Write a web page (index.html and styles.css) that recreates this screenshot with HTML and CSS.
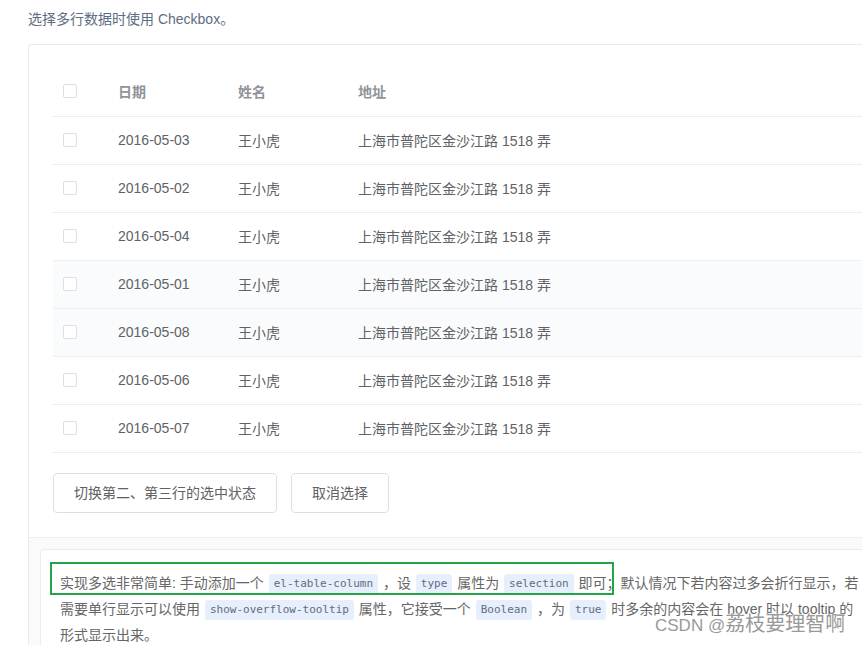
FILE: index.html
```html
<!DOCTYPE html>
<html lang="zh-CN">
<head>
<meta charset="utf-8">
<title>Checkbox 多选</title>
<link rel="stylesheet" href="styles.css">
</head>
<body>
<p class="intro">选择多行数据时使用 Checkbox。</p>
<div class="card">
  <div class="card-body">
    <div class="table">
      <div class="row head">
        <div class="cell"><span class="checkbox"></span></div>
        <div class="cell">日期</div>
        <div class="cell">姓名</div>
        <div class="cell">地址</div>
      </div>
      <div class="row">
        <div class="cell"><span class="checkbox"></span></div>
        <div class="cell">2016-05-03</div>
        <div class="cell">王小虎</div>
        <div class="cell">上海市普陀区金沙江路 1518 弄</div>
      </div>
      <div class="row">
        <div class="cell"><span class="checkbox"></span></div>
        <div class="cell">2016-05-02</div>
        <div class="cell">王小虎</div>
        <div class="cell">上海市普陀区金沙江路 1518 弄</div>
      </div>
      <div class="row">
        <div class="cell"><span class="checkbox"></span></div>
        <div class="cell">2016-05-04</div>
        <div class="cell">王小虎</div>
        <div class="cell">上海市普陀区金沙江路 1518 弄</div>
      </div>
      <div class="row shaded">
        <div class="cell"><span class="checkbox"></span></div>
        <div class="cell">2016-05-01</div>
        <div class="cell">王小虎</div>
        <div class="cell">上海市普陀区金沙江路 1518 弄</div>
      </div>
      <div class="row shaded">
        <div class="cell"><span class="checkbox"></span></div>
        <div class="cell">2016-05-08</div>
        <div class="cell">王小虎</div>
        <div class="cell">上海市普陀区金沙江路 1518 弄</div>
      </div>
      <div class="row">
        <div class="cell"><span class="checkbox"></span></div>
        <div class="cell">2016-05-06</div>
        <div class="cell">王小虎</div>
        <div class="cell">上海市普陀区金沙江路 1518 弄</div>
      </div>
      <div class="row">
        <div class="cell"><span class="checkbox"></span></div>
        <div class="cell">2016-05-07</div>
        <div class="cell">王小虎</div>
        <div class="cell">上海市普陀区金沙江路 1518 弄</div>
      </div>
    </div>
    <div class="actions">
      <button class="btn">切换第二、第三行的选中状态</button>
      <button class="btn">取消选择</button>
    </div>
  </div>
  <div class="meta">
    <div class="desc">
      <p>实现多选非常简单: 手动添加一个 <code>el-table-column</code> ，设 <code>type</code> 属性为 <code>selection</code> 即可；默认情况下若内容过多会折行显示，若<br>需要单行显示可以使用 <code>show-overflow-tooltip</code> 属性，它接受一个 <code>Boolean</code> ，为 <code>true</code> 时多余的内容会在 hover 时以 tooltip 的<br>形式显示出来。</p>
      <div class="highlight"></div>
    </div>
  </div>
</div>
<div class="watermark"><span class="wm-latin">CSDN @</span><span class="wm-cjk">荔枝要理智啊</span></div>
</body>
</html>
```
FILE: styles.css
```css
html, body {
  margin: 0;
  padding: 0;
  overflow: hidden;
  background: #fff;
}
body {
  font-family: "Liberation Sans", "Noto Sans CJK SC", sans-serif;
  font-size: 14px;
  color: #606266;
  width: 862px;
  height: 645px;
  position: relative;
}
.intro {
  margin: 0;
  padding: 8px 0 0 28px;
  line-height: 22px;
  color: #5e6d82;
}
.card {
  margin: 14px 0 0 28px;
  width: 900px;
  border: 1px solid #ebebeb;
  border-radius: 3px;
}
.card-body {
  padding: 24px;
}
.row {
  display: grid;
  grid-template-columns: 55px 120px 120px 1fr;
  height: 47px;
  align-items: center;
  border-bottom: 1px solid #ebeef5;
}
.row.shaded {
  background: #fafbfc;
}
.row.head {
  color: #909399;
  font-weight: bold;
}
.cell {
  padding-left: 10px;
  padding-bottom: 2px;
  display: flex;
  align-items: center;
  white-space: nowrap;
}
.row.head .cell {
  padding-bottom: 3px;
}
.checkbox {
  display: inline-block;
  width: 14px;
  height: 14px;
  box-sizing: border-box;
  border: 1px solid #dcdfe6;
  border-radius: 2px;
  background: #fff;
}
.actions {
  display: flex;
  gap: 14px;
  margin-top: 20px;
}
.btn {
  font-family: inherit;
  font-size: 14px;
  line-height: 14px;
  color: #606266;
  background: #fff;
  border: 1px solid #dcdfe6;
  border-radius: 4px;
  padding: 12px 20px;
  height: 40px;
  box-sizing: border-box;
}
.meta {
  border-top: 1px solid #eaeefb;
  background: #fafafa;
  padding: 11px 10px 20px 11px;
}
.desc {
  position: relative;
  background: #fff;
  border: 1px solid #ebebeb;
  border-radius: 4px;
  padding: 20px 19px;
}
.desc p {
  margin: 0;
  line-height: 26px;
  color: #666;
  white-space: nowrap;
}
.desc code {
  display: inline-block;
  font-family: "DejaVu Sans Mono", "Liberation Mono", monospace;
  font-size: 11px;
  line-height: 20px;
  padding: 0 5px;
  margin: 0 1px;
  background: #e6effb;
  color: #5e6d82;
  border-radius: 3px;
  vertical-align: middle;
}
.highlight {
  position: absolute;
  left: 9px;
  top: 12px;
  width: 564px;
  height: 33px;
  box-sizing: border-box;
  border: 2px solid #22a447;
}
.watermark {
  position: absolute;
  left: 655px;
  top: 608px;
  color: #999;
  text-shadow: 0 0 2px #fff, 0 0 1px #fff;
  white-space: nowrap;
  line-height: 30px;
}
.wm-latin {
  font-family: "Liberation Sans", sans-serif;
  font-size: 17px;
}
.wm-cjk {
  font-family: "Noto Sans CJK SC", sans-serif;
  font-size: 20px;
}
```
